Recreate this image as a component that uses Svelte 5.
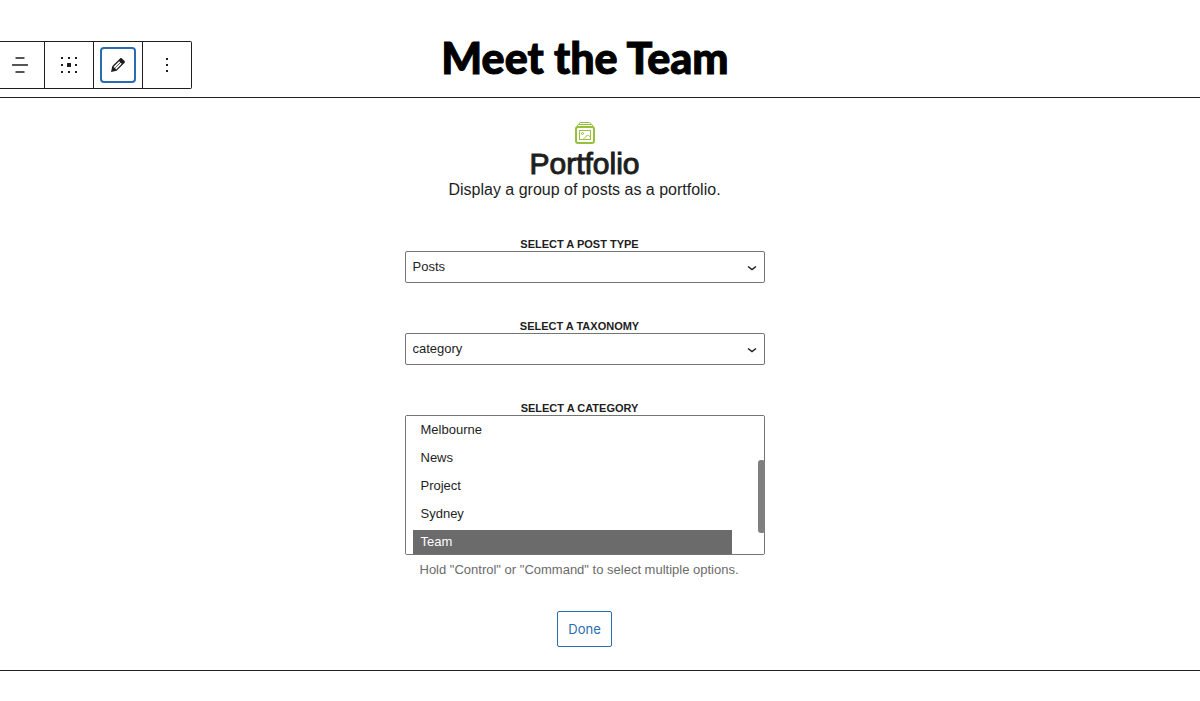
<script>
  import { onMount } from 'svelte'

  let postType = $state('Posts')
  let taxonomy = $state('category')
  let selected = $state(['Team'])
  let list

  const postTypes = ['Posts', 'Pages', 'Projects']
  const taxonomies = ['category', 'post_tag']
  const categories = ['Articles', 'Brisbane', 'Events', 'Melbourne', 'News', 'Project', 'Sydney', 'Team', 'Uncategorised']

  onMount(() => {
    list.scrollTop = 87
  })
</script>

<div class="toolbar" role="toolbar" aria-label="Block tools">
  <button type="button" class="first" aria-label="Align">
    <svg width="24" height="24" viewBox="0 0 24 24">
      <path d="M7.500 5h9M7.500 19h9M4 12h16" />
    </svg>
  </button>
  <button type="button" aria-label="Change content position">
    <svg width="24" height="24" viewBox="0 0 24 24" class="solid">
      <path d="M4 4h2v2H4zM11 4h2v2h-2zM18 4h2v2h-2zM4 11h2v2H4zM10 10h4v4h-4zM18 11h2v2h-2zM4 18h2v2H4zM11 18h2v2h-2zM18 18h2v2h-2z" />
    </svg>
  </button>
  <button type="button" class="active" aria-label="Edit">
    <span>
      <svg width="20" height="20" viewBox="0 0 20 20" class="solid">
        <path d="M13.89 3.39l2.71 2.72c.46.46.42 1.24.03 1.64l-8.01 8.02-5.56 1.16 1.16-5.58s7.6-7.63 7.99-8.03c.39-.39 1.22-.39 1.68.07zm-2.73 2.79l-5.59 5.61 1.11 1.11 5.54-5.65zm-2.97 8.23l5.58-5.6-1.07-1.08-5.59 5.6z" />
      </svg>
    </span>
  </button>
  <button type="button" aria-label="Options">
    <svg width="24" height="24" viewBox="0 0 24 24" class="solid">
      <path d="M11 5h2v2h-2zM11 11h2v2h-2zM11 17h2v2h-2z" />
    </svg>
  </button>
</div>

<main>
  <h1>Meet the Team</h1>

  <section class="block">
    <svg class="logo" width="20" height="22" viewBox="0 0 20 22">
      <path d="M4 2.500Q4.200.5 5.500.5h9Q15.800.5 16 2.500" />
      <path d="M2 4.500Q2.200 2.500 4 2.500h12Q17.800 2.500 18 4.500" />
      <rect x="1" y="5" width="18" height="16" rx="2" stroke-width="2" />
      <rect x="4.500" y="8.500" width="11" height="9" />
      <circle cx="7.500" cy="11.500" r="1" />
      <path d="M8 17.500c1-1 2-1.500 2.500-2.500s2-2 3-1.500 1 1.500 2 1.500" />
    </svg>
    <h2>Portfolio</h2>
    <p class="intro">Display a group of posts as a portfolio.</p>

    <form onsubmit={(e) => e.preventDefault()}>
      <div class="field">
        <label for="post-type">Select a post type</label>
        <div class="control">
          <select id="post-type" bind:value={postType}>
            {#each postTypes as name}
              <option>{name}</option>
            {/each}
          </select>
          <svg class="chevron" width="10" height="6" viewBox="0 0 10 6"><path d="M1 1.500l4 3 4-3" /></svg>
        </div>
      </div>

      <div class="field">
        <label for="taxonomy">Select a taxonomy</label>
        <div class="control">
          <select id="taxonomy" bind:value={taxonomy}>
            {#each taxonomies as name}
              <option>{name}</option>
            {/each}
          </select>
          <svg class="chevron" width="10" height="6" viewBox="0 0 10 6"><path d="M1 1.500l4 3 4-3" /></svg>
        </div>
      </div>

      <div class="field last">
        <label for="category">Select a category</label>
        <div class="control">
          <select id="category" multiple bind:value={selected} bind:this={list} aria-describedby="category-help">
            {#each categories as name}
              <option>{name}</option>
            {/each}
          </select>
          <div class="thumb"></div>
        </div>
        <p class="help" id="category-help">Hold "Control" or "Command" to select multiple options.</p>
      </div>

      <button type="submit" class="done">Done</button>
    </form>
  </section>
</main>

<style>
  :global(body) {
    background: #fff;
    color: #1e1e1e;
    font-family: "Liberation Sans", Arial, sans-serif;
    font-size: 13px;
  }

  h1, h2, p {
    margin: 0;
  }

  /* Block toolbar, floats over the editor */
  .toolbar {
    position: absolute;
    top: 41px;
    left: 0;
    display: flex;
    height: 46px;
    border: 1px solid #1e1e1e;
    border-left: 0;
    border-radius: 0 2px 2px 0;
    background: #fff;
  }

  .toolbar button {
    display: flex;
    align-items: center;
    justify-content: center;
    width: 49px;
    padding: 0;
    border: 0;
    border-left: 1px solid #1e1e1e;
    background: none;
    color: #1e1e1e;
  }

  .toolbar .first {
    width: 44px;
    padding-right: 4px;
    border-left: 0;
  }

  .toolbar svg {
    fill: none;
    stroke: currentColor;
    stroke-width: 1.5;
  }

  .toolbar svg.solid {
    fill: currentColor;
    stroke: none;
  }

  .active span {
    display: flex;
    align-items: center;
    justify-content: center;
    width: 32px;
    height: 32px;
    border: 2px solid #2a6cb0;
    border-radius: 4px;
  }

  h1 {
    padding: 30px 30px 11px 0;
    color: #000;
    font-family: Lato, "Open Sans", sans-serif;
    font-size: 43px;
    font-weight: 900;
    line-height: 56px;
    text-align: center;
    -webkit-text-stroke: 1px #000;
  }

  .block {
    display: flex;
    flex-direction: column;
    align-items: center;
    padding: 24px 31px 23px 0;
    border-top: 1px solid #1e1e1e;
    border-bottom: 1px solid #1e1e1e;
    text-align: center;
  }

  .logo {
    fill: none;
    stroke: #97c13c;
  }

  h2 {
    margin-top: 3px;
    font-size: 30px;
    font-weight: 400;
    line-height: 34px;
    -webkit-text-stroke: 1px #1e1e1e;
  }

  .intro {
    font-size: 16px;
    line-height: 18px;
  }

  form {
    display: flex;
    flex-direction: column;
    align-items: center;
    width: 360px;
    max-width: 100%;
    margin-top: 38px;
  }

  .field {
    width: 100%;
    margin-bottom: 36px;
  }

  .field.last {
    margin-bottom: 33px;
  }

  label {
    display: block;
    padding-right: 10px;
    font-size: 11px;
    font-weight: 700;
    line-height: 14px;
    text-transform: uppercase;
  }

  .control {
    position: relative;
  }

  select {
    display: block;
    box-sizing: border-box;
    width: 100%;
    height: 32px;
    padding: 0 24px 2px 7px;
    border: 1px solid #757575;
    border-radius: 2px;
    background: #fff;
    color: #1e1e1e;
    font-family: inherit;
    font-size: 13px;
    appearance: none;
  }

  select[multiple] {
    height: 140px;
    padding: 8px 32px 8px 7px;
    overflow-y: auto;
    scrollbar-width: none;
  }

  select[multiple] option {
    box-sizing: border-box;
    height: 24px;
    margin-bottom: 4px;
    padding: 4px 8px;
  }

  select[multiple] option:checked {
    background: linear-gradient(#6b6b6b, #6b6b6b);
    -webkit-text-fill-color: #fff;
  }

  .chevron {
    position: absolute;
    top: 14px;
    right: 8px;
    fill: none;
    stroke: #1e1e1e;
    stroke-width: 1.5;
    pointer-events: none;
  }

  .thumb {
    position: absolute;
    top: 45px;
    right: 0;
    width: 7px;
    height: 73px;
    border-radius: 3px;
    background: #7f7f7f;
    pointer-events: none;
  }

  .help {
    padding-left: 15px;
    margin-top: 6px;
    color: #6b6b6b;
    line-height: 17px;
    text-align: left;
  }

  .done {
    height: 36px;
    padding: 0 10px;
    border: 1px solid #2a6cb0;
    border-radius: 2px;
    background: #fff;
    color: #2a6cb0;
    font-family: Inter, sans-serif;
    font-size: 13px;
  }
</style>
